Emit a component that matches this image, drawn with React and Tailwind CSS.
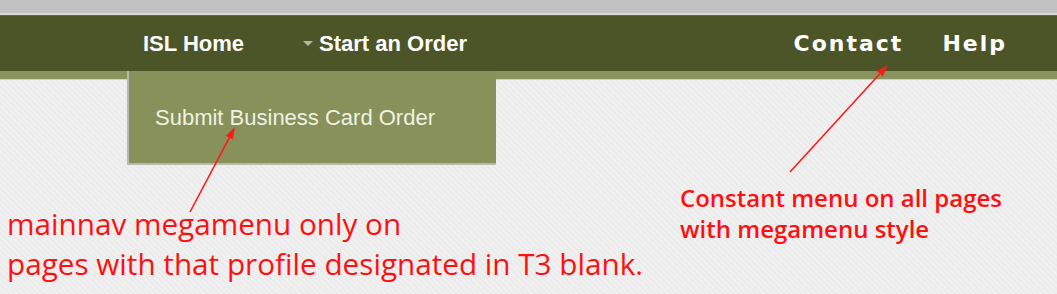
export default function App() {
  return (
    <div className="relative flex h-[294px] w-[1057px] flex-col overflow-hidden bg-[#efefef]">
      {/* browser chrome edge */}
      <div className="h-[13px] bg-[#c2c2c2]" />
      <div className="h-[2px] bg-[#d9d9d9]" />
      <div className="h-[1px] bg-[#62644f]" />

      {/* main nav */}
      <nav className="flex h-[55px] items-center bg-[#4b5528] pl-[143px] pr-[50px]">
        <a className="font-['Liberation_Sans',Arial,sans-serif] text-[22px] font-bold text-white">
          ISL Home
        </a>
        <div className="ml-[59px] flex items-center">
          <span className="mr-[6px] h-0 w-0 border-x-[5px] border-t-[5px] border-x-transparent border-t-[#b4b9a0]" />
          <a className="font-['Liberation_Sans',Arial,sans-serif] text-[22px] font-bold text-white">
            Start an Order
          </a>
        </div>
        <div className="ml-auto flex items-center gap-[39px] font-['DejaVu_Sans',Verdana,sans-serif] text-[22px] font-bold tracking-[2px] text-white">
          <a>Contact</a>
          <a>Help</a>
        </div>
      </nav>

      {/* sub strip */}
      <div className="h-[8px] bg-[#8a935d]" />
      <div className="h-[1px] bg-[#cfd2c2]" />

      {/* dropdown */}
      <div className="absolute left-[127px] top-[71px] flex h-[94px] w-[369px] items-center border-b-2 border-l-2 border-[#b8b9b2] bg-[#879159] pl-[26px]">
        <span className="font-['Liberation_Sans',Arial,sans-serif] text-[22px] text-[#eef1e4]">
          Submit Business Card Order
        </span>
      </div>

      {/* page body with notes */}
      <div className="flex flex-1 bg-[repeating-linear-gradient(45deg,#f0f0f0_0px,#f0f0f0_2px,#ebebeb_2px,#ebebeb_4px)]">
        <div className="mt-[124px] w-[680px] shrink-0 pl-[7px] font-['Open_Sans','Noto_Sans',sans-serif] text-[29.7px] leading-[40px] text-[#ff1010]">
          <p>mainnav megamenu only on</p>
          <p>pages with that profile designated in T3 blank.</p>
        </div>
        <div className="mt-[102px] font-['Open_Sans','Noto_Sans',sans-serif] text-[24px] font-semibold leading-[31px] text-[#ff1010]">
          <p>Constant menu on all pages</p>
          <p>with megamenu style</p>
        </div>
      </div>

      {/* annotation arrows */}
      <svg
        className="pointer-events-none absolute left-0 top-0"
        width="1057"
        height="294"
        viewBox="0 0 1057 294"
      >
        <line x1="190" y1="212" x2="229.4" y2="137.6" stroke="#ff1a1a" strokeWidth="1.6" />
        <polygon points="235,127 232.9,139.5 225.9,135.7" fill="#ff1a1a" />
        <line x1="790" y1="172" x2="879.9" y2="73.8" stroke="#ff1a1a" strokeWidth="1.6" />
        <polygon points="888,65 882.8,76.5 877,71.1" fill="#ff1a1a" />
      </svg>
    </div>
  );
}
